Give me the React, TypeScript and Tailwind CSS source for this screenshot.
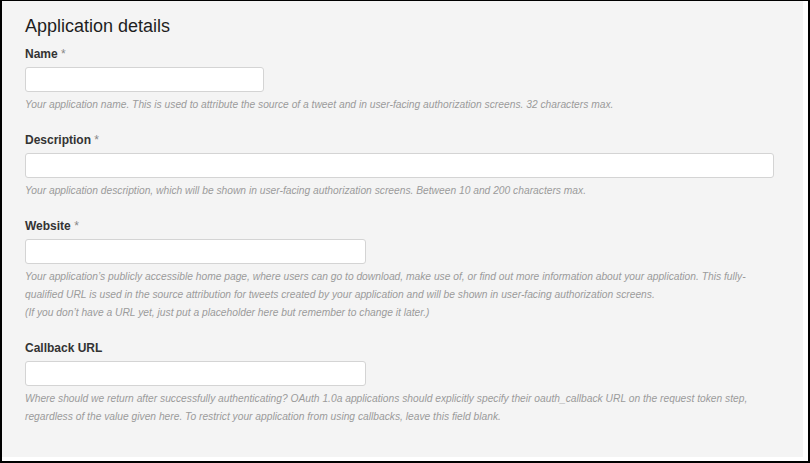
import React from 'react';

interface FieldProps {
  label: string;
  required?: boolean;
  inputWidth: string;
  help: React.ReactNode[];
}

const Field: React.FC<FieldProps> = ({ label, required, inputWidth, help }) => (
  <div className="mt-[18px] first:mt-0">
    <label className="block text-[12px] leading-[16px] font-bold text-[#333]">
      {label}
      {required && <span className="font-normal text-[#888]"> *</span>}
    </label>
    <input
      type="text"
      className={`mt-[5px] block h-[25px] ${inputWidth} rounded-[3px] border border-[#d4d4d4] bg-white outline-none`}
    />
    <div className="mt-[4px] text-[10.25px] leading-[18px] italic text-[#9b9b9b]">
      {help.map((line, i) => (
        <p key={i} className="whitespace-nowrap">{line}</p>
      ))}
    </div>
  </div>
);

export default function App() {
  return (
    <div
      className="flex h-[463px] w-[810px] bg-black pt-px pl-[2px] pr-[2px] pb-[2px]"
      style={{ fontFamily: '"Liberation Sans", Arial, sans-serif' }}
    >
      <div className="flex flex-1 bg-white pr-[5px] pb-[4px]">
        <div className="flex-1 bg-[#f4f4f4] pl-[23px] pt-[13px]">
          <h2 className="text-[18px] leading-[24px] text-[#1e1e1e]">Application details</h2>
          <div className="mt-[8px]">
            <Field
              label="Name"
              required
              inputWidth="w-[239px]"
              help={[
                'Your application name. This is used to attribute the source of a tweet and in user-facing authorization screens. 32 characters max.',
              ]}
            />
            <Field
              label="Description"
              required
              inputWidth="w-[749px]"
              help={[
                'Your application description, which will be shown in user-facing authorization screens. Between 10 and 200 characters max.',
              ]}
            />
            <Field
              label="Website"
              required
              inputWidth="w-[341px]"
              help={[
                'Your application\u2019s publicly accessible home page, where users can go to download, make use of, or find out more information about your application. This fully-',
                'qualified URL is used in the source attribution for tweets created by your application and will be shown in user-facing authorization screens.',
                '(If you don\u2019t have a URL yet, just put a placeholder here but remember to change it later.)',
              ]}
            />
            <Field
              label="Callback URL"
              inputWidth="w-[341px]"
              help={[
                'Where should we return after successfully authenticating? OAuth 1.0a applications should explicitly specify their oauth_callback URL on the request token step,',
                'regardless of the value given here. To restrict your application from using callbacks, leave this field blank.',
              ]}
            />
          </div>
        </div>
      </div>
    </div>
  );
}
